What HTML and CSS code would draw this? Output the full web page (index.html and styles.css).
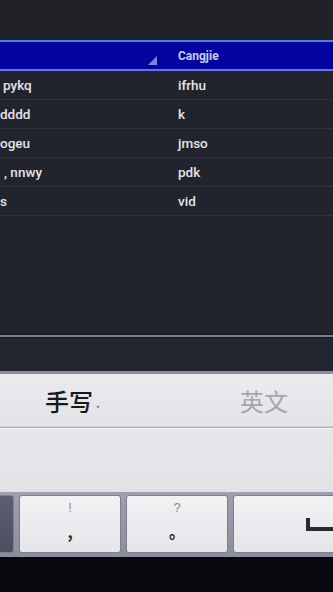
FILE: index.html
```html
<!DOCTYPE html>
<html>
<head>
<meta charset="utf-8">
<link rel="stylesheet" href="styles.css">
</head>
<body>
<div class="screen">
  <div class="topbar"></div>
  <div class="table">
    <div class="thead">
      <div class="c1 hcell"><span class="sort"></span></div>
      <div class="c2 hcell">Cangjie</div>
    </div>
    <div class="row"><div class="c1"><span class="t1 in3">pykq</span></div><div class="c2">ifrhu</div></div>
    <div class="row"><div class="c1"><span class="t1">dddd</span></div><div class="c2">k</div></div>
    <div class="row"><div class="c1"><span class="t1">ogeu</span></div><div class="c2">jmso</div></div>
    <div class="row"><div class="c1"><span class="t1 in4">, nnwy</span></div><div class="c2">pdk</div></div>
    <div class="row"><div class="c1"><span class="t1">s</span></div><div class="c2">vid</div></div>
  </div>
  <div class="empty"></div>
  <div class="divider"></div>
  <div class="strip"></div>
  <div class="keyboard">
    <div class="cand">
      <span class="mode">手写<span class="dot">·</span></span>
      <span class="lang">英文</span>
    </div>
    <div class="cand-sep"></div>
    <div class="pad"></div>
    <div class="keys">
      <div class="key dark"></div>
      <div class="key"><span class="top">!</span><span class="main">,</span></div>
      <div class="key"><span class="top">?</span><span class="main">。</span></div>
      <div class="key space">
        <svg class="spaceglyph" width="30" height="16" viewBox="0 0 30 16"><path d="M4 2 V13 H30" fill="none" stroke="#2a2a2e" stroke-width="4"/></svg>
      </div>
    </div>
  </div>
  <div class="bottom"></div>
</div>
</body>
</html>
```
FILE: styles.css
```css
html, body {
  margin: 0;
  padding: 0;
  background: #08080c;
}
.screen {
  width: 333px;
  height: 592px;
  overflow: hidden;
  display: flex;
  flex-direction: column;
  font-family: Roboto, "Noto Sans", sans-serif;
}
.topbar {
  height: 40px;
  background: #202228;
}
.table {
  background: #21242c;
}
.thead {
  height: 27px;
  display: flex;
  align-items: center;
  background: #0303a0;
  border-top: 2px solid #4f7fcf;
  border-bottom: 2px solid #6d6ee0;
}
.hcell {
  height: 27px;
  display: flex;
  align-items: center;
}
.thead .c2 {
  color: #c9cef5;
  font-weight: bold;
  font-size: 12px;
}
.c1 {
  width: 178px;
  flex: none;
  overflow: hidden;
}
.c2 {
  flex: 1;
}
.thead .c1 {
  justify-content: flex-end;
  padding-right: 21px;
  box-sizing: border-box;
}
.sort {
  width: 0;
  height: 0;
  border-left: 9px solid transparent;
  border-bottom: 9px solid #7c86d6;
  margin-top: 10px;
}
.row {
  height: 28px;
  display: flex;
  align-items: center;
  border-bottom: 1px solid #30343d;
  color: #e4e5e8;
  font-size: 13.5px;
  font-weight: 500;
}
.row .c1 {
  height: 28px;
  display: flex;
  align-items: center;
}
.t1 {
  display: block;
  white-space: nowrap;
}
.in3 {
  padding-left: 3px;
}
.in4 {
  padding-left: 4px;
}
.empty {
  height: 118px;
  background: #21242c;
}
.divider {
  height: 2px;
  background: #7c8089;
  border-top: 1px solid #15171c;
  border-bottom: 1px solid #121418;
}
.strip {
  height: 33px;
  background: #212530;
}
.keyboard {
  background: #e6e6ea;
  border-top: 3px solid #8a8d96;
}
.cand {
  height: 52px;
  display: flex;
  align-items: center;
  font-family: "Noto Sans CJK SC", sans-serif;
  font-size: 24px;
  background: linear-gradient(#ebebef, #e3e3e8);
}
.mode {
  margin-left: 45px;
  color: #1a1a1c;
  width: 195px;
  font-weight: 500;
}
.dot {
  font-size: 10px;
  color: #777;
}
.lang {
  color: #a5a5aa;
}
.cand-sep {
  height: 1px;
  background: #b0b0b6;
  border-bottom: 1px solid #f4f4f6;
  border-top: 1px solid #d0d0d4;
}
.pad {
  height: 63px;
  background: linear-gradient(#e8e8ec, #e2e2e6);
}
.keys {
  height: 65px;
  display: flex;
  gap: 5px;
  padding: 3px 0 4px 0;
  box-sizing: border-box;
  background: linear-gradient(#9ea1ad, #8a8d9a);
  margin-left: -4px;
}
.key {
  width: 100px;
  flex: none;
  border-radius: 3px;
  background: linear-gradient(#f2f2f5, #e5e5ea);
  border: 1px solid #7d808c;
  display: flex;
  flex-direction: column;
  align-items: center;
  font-family: "Noto Sans CJK SC", sans-serif;
}
.key.dark {
  width: 16px;
  background: linear-gradient(#5d6070, #4b4e5e);
}
.key.space {
  width: 110px;
  align-items: flex-start;
}
.top {
  margin-top: 4px;
  font-family: "Liberation Sans", sans-serif;
  font-size: 13px;
  color: #8a8a90;
  line-height: 16px;
}
.main {
  margin-top: 5px;
  font-size: 16px;
  font-weight: bold;
  color: #222;
  line-height: 20px;
}
.spaceglyph {
  margin-top: 20px;
  margin-left: 70px;
}
.bottom {
  flex: 1;
  background: #08080e;
}
```
